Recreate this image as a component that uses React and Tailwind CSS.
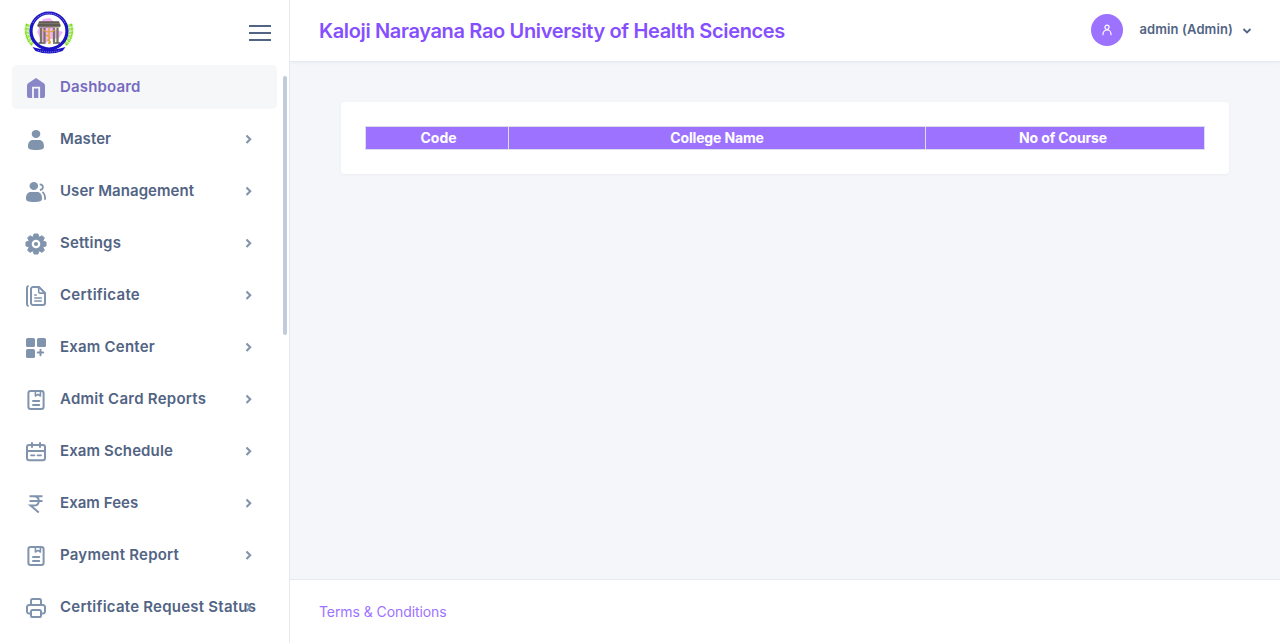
import React from 'react';

const line = { fill: 'none', stroke: 'currentColor', strokeWidth: 2, strokeLinecap: 'round', strokeLinejoin: 'round' };

const icons = {
  home: (
    <>
      <path d="M12 2 19.8 7.3Q21 8.1 21 9.5V20a2 2 0 0 1-2 2H5a2 2 0 0 1-2-2V9.5Q3 8.1 4.2 7.3Z" fill="currentColor" />
      <path d="M9 22.5V11.7h6.2v10.8" fill="none" stroke="#f5f7f9" strokeWidth="1.8" />
    </>
  ),
  user: (
    <g fill="currentColor">
      <ellipse cx="12" cy="5.9" rx="4.3" ry="4" />
      <path d="M9 12h6c3.2 0 5 2.6 5 6 0 1.5-.2 2.5-1.3 3-1.5.8-4 1-6.7 1s-5.2-.2-6.7-1C4.2 20.500 4 19.500 4 18c0-3.400 1.800-6 5-6Z" />
    </g>
  ),
  users: (
    <>
      <g fill="currentColor">
        <ellipse cx="9.8" cy="6" rx="4.3" ry="4" />
        <path d="M7 12h6c3.2 0 5 2.6 5 6 0 1.5-.2 2.5-1.3 3-1.500.8-4 1-6.700 1s-5.200-.2-6.700-1C2.200 20.500 2 19.500 2 18c0-3.400 1.800-6 5-6Z" />
      </g>
      <path d="M15.700 4.300c2.200.2 3.200 1.300 3.200 2.800 0 1.600-1.200 2.700-3 2.900M18.400 11.900c1.900 1.400 2.900 3.800 2.700 7.800" fill="none" stroke="currentColor" strokeWidth="1.800" />
    </>
  ),
  gear: (
    <>
      <path d="M10 2h4l.6 2.6 1.2.5L18.1 3.700l2.300 2.300L19 8.200l.5 1.200L22 10v4l-2.500.6-.5 1.200 1.400 2.300-2.300 2.300-2.300-1.400-1.200.5L14 22h-4l-.6-2.500-1.200-.5-2.300 1.400-2.300-2.300L5 15.800l-.5-1.200L2 14v-4l2.500-.6.5-1.200-1.400-2.200 2.300-2.300 2.300 1.400 1.200-.5Z" fill="currentColor" stroke="currentColor" strokeWidth="1" strokeLinejoin="round" />
      <circle cx="12" cy="12" r="4.300" fill="#fff" />
      <circle cx="12" cy="12" r="2.100" fill="currentColor" />
    </>
  ),
  docs: (
    <g {...line}>
      <path d="M3.900 2.300C3.200 2.500 3 3 3 4v16c0 1 .2 1.500.9 1.700" />
      <path d="M9.200 3h5.800l6 6v10a2 2 0 0 1-2 2H9.200A2.100 2.100 0 0 1 7 19V5A2.100 2.100 0 0 1 9.200 3Z" />
      <path d="M14.700 3.200v4.500c0 .9.500 1.400 1.400 1.400h4.600" strokeWidth="1.600" />
      <path d="M10.800 11h1.500M10.800 14h6.500M10.800 17h6.500" strokeWidth="1.600" />
    </g>
  ),
  grid: (
    <>
      <g fill="currentColor">
        <rect x="2" y="2" width="9" height="9" rx="1.600" />
        <rect x="13" y="2" width="9" height="9" rx="1.600" />
        <rect x="2" y="13" width="9" height="9" rx="1.600" />
      </g>
      <path d="M16.500 13.800v5.400M13.800 16.500h5.400" {...line} />
    </>
  ),
  report: (
    <g {...line}>
      <rect x="4.400" y="3" width="15.200" height="18" rx="2.200" />
      <path d="M11.400 3v5l2.500-1.600L16.400 8V3" strokeWidth="1.600" />
      <path d="M9 13h6.200M9 17h6.200" />
    </g>
  ),
  calendar: (
    <g {...line}>
      <rect x="3" y="5" width="18" height="15.200" rx="2.200" />
      <path d="M8 3v4M16 3v4M3 11h18" />
      <path d="M7 15.300h3.500M13.600 15.300h3.500" strokeWidth="1.700" />
    </g>
  ),
  rupee: (
    <path d="M5.500 4.200h13M5.500 8.900h13M5.500 4.200h4.100c3.400 0 5.200 2 5.200 4.700s-1.800 4.600-5.200 4.600H6.500l8.300 7" fill="none" stroke="currentColor" strokeWidth="2" />
  ),
  printer: (
    <g {...line}>
      <path d="M7 8V4.400C7 3.400 7.500 3 8.400 3h7.200c.9 0 1.400.4 1.400 1.400V8" />
      <path d="M6.500 17.500H5A2 2 0 0 1 3 15.400V11A2.200 2.200 0 0 1 5.300 8.900h13.400A2.200 2.200 0 0 1 21 11v4.400A2 2 0 0 1 19 17.500h-1.500" />
      <rect x="7" y="14" width="10" height="7" rx="1.600" />
    </g>
  ),
};

const items = [
  ['Dashboard', 'home', 'tracking-[0.17px]'],
  ['Master', 'user', 'tracking-[0.08px]'],
  ['User Management', 'users', 'tracking-[0.06px]'],
  ['Settings', 'gear', 'tracking-[0.2px]'],
  ['Certificate', 'docs', 'tracking-[0.3px]'],
  ['Exam Center', 'grid', 'tracking-[0.22px]'],
  ['Admit Card Reports', 'report', 'tracking-[0.26px]'],
  ['Exam Schedule', 'calendar', 'tracking-[0.12px]'],
  ['Exam Fees', 'rupee', 'tracking-[0.05px]'],
  ['Payment Report', 'report', 'tracking-[0.23px]'],
  ['Certificate Request Status', 'printer', 'tracking-[0.23px]'],
];

function Emblem() {
  return (
    <svg viewBox="0 0 50 44" className="h-11 w-[50px]">
      <g fill="none" stroke="#a4ec55" strokeWidth="4.500" strokeDasharray="3 .8">
        <path d="M4 13C1.500 20 3 28 9 33.500" />
        <path d="M46 13c2.500 7 1 15-5 20.500" />
      </g>
      <g fill="none" stroke="#6fcf2a" strokeWidth="1">
        <path d="M3 13C0 22 3 30 9 35" strokeDasharray="2 1.500" />
        <path d="M47 13c3 9 0 17-6 22" strokeDasharray="2 1.500" />
      </g>
      <circle cx="25" cy="20" r="18" fill="#fff" stroke="#1c14c4" strokeWidth="3.200" />
      <path d="M9 12a18 18 0 0 1 32 0" fill="none" stroke="#a9a6f0" strokeWidth=".9" strokeDasharray="1 1" />
      <path d="m19 8 7-1 5 5-1 6 9 3-4 6-8 1-6 5-5-6-3-6Z" fill="#f2b6f4" />
      <path d="M15 10.500h20l2 4.500-2 1.500H15L13 15Z" fill="#7a7368" />
      <path d="M15 11h20M14 14h22" stroke="#45403c" strokeWidth=".9" />
      <path d="M17 17v15M20.500 17v14M30 17v14M33.500 17v15" stroke="#7b7469" strokeWidth="2.300" />
      <path d="M14.500 32h7M29 32h7" stroke="#5d5750" strokeWidth="1.600" />
      <path d="M25 17v16M19 19q6 4 12 0M22 24q6 2 2 5 4 2 1 4" stroke="#e2a63a" strokeWidth="1.500" fill="none" />
      <path d="M8.500 36q5 1.500 8.500 2 8 1.500 16 0 3.500-.5 8.500-2l-3 4q-13.500 5-27 0Z" fill="#1c14c4" />
      <path d="M14 39.500q11 3 22 0" stroke="#aaa8f2" strokeWidth=".8" strokeDasharray="1 1" fill="none" />
    </svg>
  );
}

function Sidebar() {
  return (
    <aside className="relative flex h-full w-[290px] shrink-0 flex-col border-r border-[#e5e9f2] bg-white">
      <div className="flex h-[65px] shrink-0 items-center justify-between pr-[18px] pl-6">
        <Emblem />
        <div className="flex w-[22px] flex-col gap-[5px] text-[#526484]">
          <span className="h-0.5 bg-current" />
          <span className="h-0.5 bg-current" />
          <span className="h-0.5 bg-current" />
        </div>
      </div>
      <nav className="flex flex-col gap-2 px-3">
        {items.map(([label, icon, track], i) => (
          <a
            key={label}
            className={`relative flex h-11 items-center rounded-[5px] pl-3 ${i === 0 ? 'bg-[#f5f7f9] text-[#766bc0]' : 'text-[#526484]'}`}
          >
            <svg viewBox="0 0 24 24" className={`size-6 shrink-0 translate-y-px ${i === 0 ? 'text-[#8a87c8]' : 'text-[#8094ae]'}`}>
              {icons[icon]}
            </svg>
            <span className={`ml-3 text-[15px] leading-5 font-semibold whitespace-nowrap ${track}`}>{label}</span>
            {i > 0 && (
              <svg viewBox="0 0 8 10" className="absolute top-[17px] right-6 h-2.5 w-2 text-[#8094ae]">
                <path d="m1.500 1.500 3.700 3.700-3.700 3.700" fill="none" stroke="currentColor" strokeWidth="2.100" />
              </svg>
            )}
          </a>
        ))}
      </nav>
      <div className="absolute top-[76px] right-0.5 h-[259px] w-1 rounded-full bg-[#c0ccda]" />
    </aside>
  );
}

export default function App() {
  return (
    <div className="flex h-[643px] w-full overflow-hidden bg-[#f5f6fa] font-['Inter',sans-serif]">
      <Sidebar />
      <div className="flex min-w-0 flex-1 flex-col">
        <header className="flex h-[62px] shrink-0 items-center justify-between border-b border-[#e5e9f2] bg-white pr-7 pl-[29px] shadow-[0_1px_3px_rgba(54,74,99,0.05)]">
          <h1 className="text-[20px] font-semibold tracking-[-0.35px] whitespace-nowrap text-[#854fff]">
            Kaloji Narayana Rao University of Health Sciences
          </h1>
          <div className="flex items-center pb-0.5 text-[#526484]">
            <span className="flex size-8 items-center justify-center rounded-full bg-[#9d72ff] text-white">
              <svg viewBox="0 0 12 12" className="size-3">
                <g fill="none" stroke="currentColor" strokeWidth="1.200" strokeLinecap="round">
                  <circle cx="6" cy="3.300" r="2.100" />
                  <path d="M2 10.700V10a4 4 0 0 1 8 0v.7" />
                </g>
              </svg>
            </span>
            <span className="ml-4 text-[13px] font-semibold tracking-[0.12px] whitespace-nowrap">admin (Admin)</span>
            <svg viewBox="0 0 10 8" className="mt-[3px] ml-[9px] h-2 w-2.5">
              <path d="m1.500 2 3.500 3.500L8.500 2" fill="none" stroke="currentColor" strokeWidth="1.800" />
            </svg>
          </div>
        </header>
        <main className="flex-1 px-[51px] pt-10">
          <section className="h-[72px] rounded bg-white p-6 shadow-[0_1px_3px_rgba(54,74,99,0.05)]">
            <div className="grid h-6 grid-cols-[142px_416px_1fr] gap-px border border-[#dbdfea] bg-[#dbdfea] text-center text-[14px] leading-[22px] font-bold text-white">
              <div className="bg-[#9d72ff] pl-[3px]">Code</div>
              <div className="bg-[#9d72ff] tracking-[-0.15px]">College Name</div>
              <div className="bg-[#9d72ff] pr-1 tracking-[-0.15px]">No of Course</div>
            </div>
          </section>
        </main>
        <footer className="flex h-16 shrink-0 items-center border-t border-[#e5e9f2] bg-white pl-[29px]">
          <a className="text-[14px] tracking-[-0.08px] text-[#9d72ff]">Terms &amp; Conditions</a>
        </footer>
      </div>
    </div>
  );
}
